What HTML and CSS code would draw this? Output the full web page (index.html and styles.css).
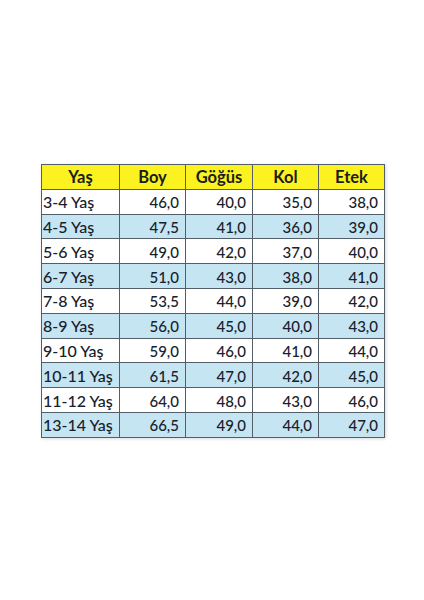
FILE: index.html
```html
<!DOCTYPE html>
<html lang="tr">
<head>
<meta charset="utf-8">
<link rel="stylesheet" href="styles.css">
</head>
<body>
<div class="page">
<table class="size-table">
<colgroup><col class="c1"><col class="c2"><col class="c3"><col class="c4"><col class="c5"></colgroup>
<thead>
<tr><th>Yaş</th><th>Boy</th><th>Göğüs</th><th>Kol</th><th>Etek</th></tr>
</thead>
<tbody>
<tr><td class="age">3-4 Yaş</td><td>46,0</td><td>40,0</td><td>35,0</td><td>38,0</td></tr>
<tr class="blue"><td class="age">4-5 Yaş</td><td>47,5</td><td>41,0</td><td>36,0</td><td>39,0</td></tr>
<tr><td class="age">5-6 Yaş</td><td>49,0</td><td>42,0</td><td>37,0</td><td>40,0</td></tr>
<tr class="blue"><td class="age">6-7 Yaş</td><td>51,0</td><td>43,0</td><td>38,0</td><td>41,0</td></tr>
<tr><td class="age">7-8 Yaş</td><td>53,5</td><td>44,0</td><td>39,0</td><td>42,0</td></tr>
<tr class="blue"><td class="age">8-9 Yaş</td><td>56,0</td><td>45,0</td><td>40,0</td><td>43,0</td></tr>
<tr><td class="age">9-10 Yaş</td><td>59,0</td><td>46,0</td><td>41,0</td><td>44,0</td></tr>
<tr class="blue"><td class="age">10-11 Yaş</td><td>61,5</td><td>47,0</td><td>42,0</td><td>45,0</td></tr>
<tr><td class="age">11-12 Yaş</td><td>64,0</td><td>48,0</td><td>43,0</td><td>46,0</td></tr>
<tr class="blue"><td class="age">13-14 Yaş</td><td>66,5</td><td>49,0</td><td>44,0</td><td>47,0</td></tr>
</tbody>
</table>
</div>
</body>
</html>
```
FILE: styles.css
```css
html, body {
  margin: 0;
  padding: 0;
  background: #ffffff;
}
.page {
  width: 424px;
  height: 600px;
  padding: 164px 0 0 41px;
  box-sizing: border-box;
}
.size-table {
  border-collapse: collapse;
  table-layout: fixed;
  width: 343px;
  font-family: Lato, "Open Sans", sans-serif;
  font-size: 15px;
  color: #17212b;
  border: 1.5px solid #3a434c;
  box-shadow: 1px 1px 3px rgba(0,0,0,0.15);
}
.c1 { width: 78px; }
.c2 { width: 66px; }
.c3 { width: 67px; }
.c4 { width: 66px; }
.c5 { width: 66px; }
.size-table tr {
  height: 24.8px;
}
.size-table th,
.size-table td {
  border: 1px solid #545e68;
  padding: 1px 6px 0 2px;
  line-height: 18px;
  white-space: nowrap;
  overflow: hidden;
}
.size-table th {
  background: #fbf21f;
  font-weight: 700;
  text-align: center;
  padding: 0;
  font-size: 16.5px;
  color: #1a1d20;
}
.size-table td {
  text-align: right;
  background: #ffffff;
  font-weight: 500;
}
.size-table td.age {
  text-align: left;
  font-size: 16px;
  padding-left: 1px;
  padding-right: 0;
}
.size-table tr.blue td {
  background: #c6e5f3;
}
```
